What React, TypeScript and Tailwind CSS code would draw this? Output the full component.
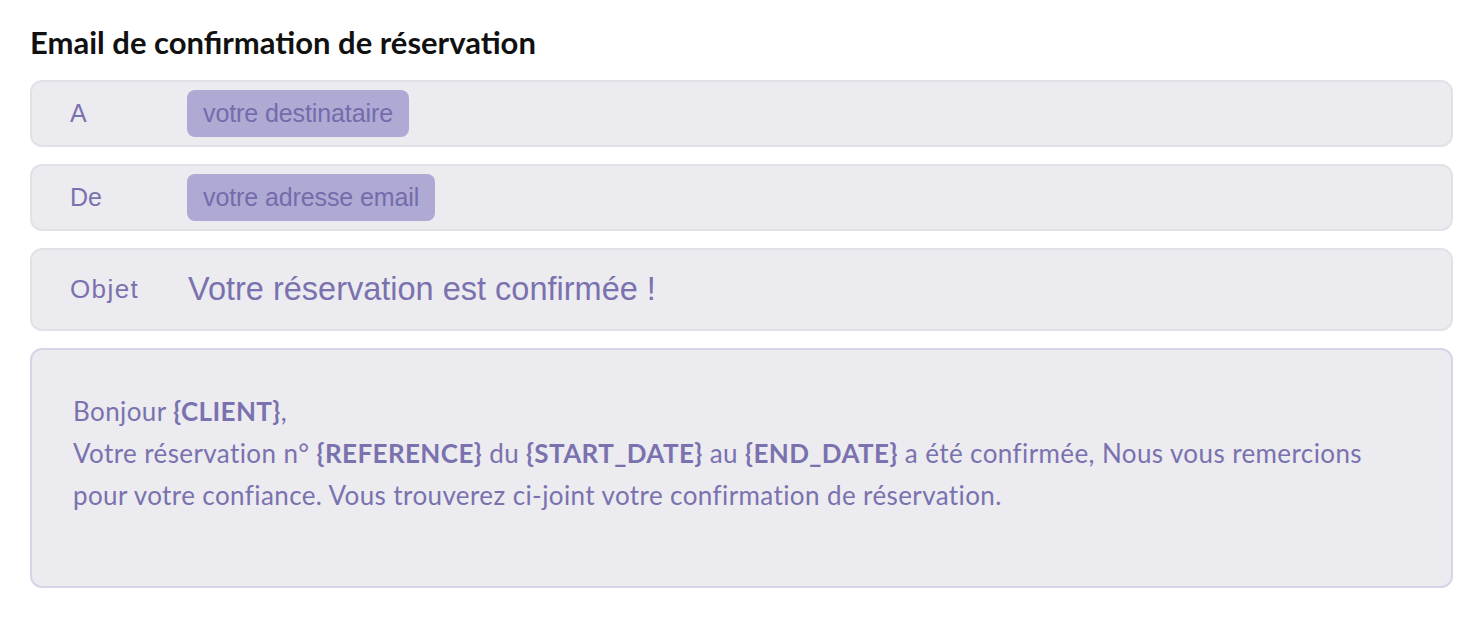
import React from 'react';

const rows = [
  { label: 'A', chip: 'votre destinataire' },
  { label: 'De', chip: 'votre adresse email' },
];

export default function App() {
  return (
    <div className="min-h-screen bg-white px-[30px] pt-[24px] font-['Lato',sans-serif]">
      <h1 className="text-[31px] font-bold leading-[36px] text-[#111111]">
        Email de confirmation de réservation
      </h1>

      <div className="mt-[20px] flex flex-col gap-[17px] w-[1423px]">
        {rows.map(row => (
          <div
            key={row.label}
            className="flex items-center h-[67px] rounded-[12px] border-2 border-[#e1e1e8] bg-[#ebebf0] pl-[38px] font-['Liberation_Sans',sans-serif]"
          >
            <span className="w-[117px] text-[25px] text-[#7a72ae]">{row.label}</span>
            <span className="rounded-[8px] bg-[#aeaad4] px-[16px] h-[47px] flex items-center text-[25px] tracking-[-0.1px] text-[#746cab]">
              {row.chip}
            </span>
          </div>
        ))}

        <div className="flex items-center h-[83px] rounded-[12px] border-2 border-[#e1e1e8] bg-[#ebebf0] pl-[38px] font-['Liberation_Sans',sans-serif]">
          <span className="w-[118px] text-[26px] tracking-[1.4px] text-[#7a72ae]">Objet</span>
          <span className="text-[32.5px] text-[#7a72ae]">Votre réservation est confirmée !</span>
        </div>

        <div className="rounded-[12px] border-2 border-[#d6d4e7] bg-[#ebebf0] pl-[41px] pr-[40px] pt-[40px] pb-[70px] text-[26px] tracking-[0.4px] leading-[42px] text-[#7a72ae]">
          <p>
            Bonjour <b>{'{CLIENT}'}</b>,
          </p>
          <p className="whitespace-nowrap">
            Votre réservation n° <b>{'{REFERENCE}'}</b> du <b>{'{START_DATE}'}</b> au{' '}
            <b>{'{END_DATE}'}</b> a été confirmée, Nous vous remercions
            <br />
            pour votre confiance. Vous trouverez ci-joint votre confirmation de réservation.
          </p>
        </div>
      </div>
    </div>
  );
}
